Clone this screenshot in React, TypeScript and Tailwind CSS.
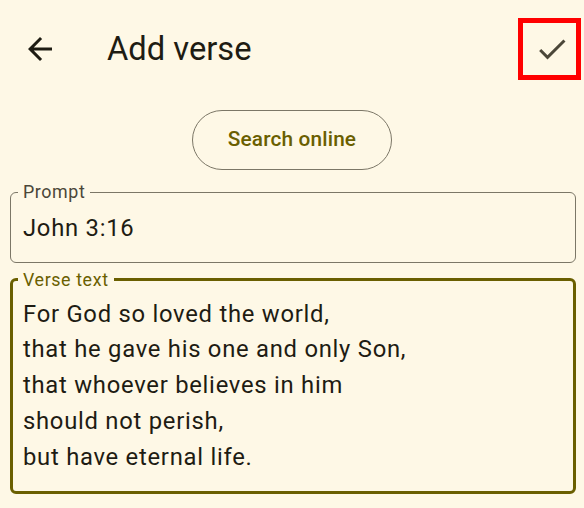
import React from 'react';

const verse = [
  'For God so loved the world,',
  'that he gave his one and only Son,',
  'that whoever believes in him',
  'should not perish,',
  'but have eternal life.',
];

function BackIcon() {
  return (
    <svg viewBox="0 0 24 24" className="w-[36px] h-[36px]" fill="#1e1c13">
      <path d="M20 11H7.83l5.59-5.59L12 4l-8 8 8 8 1.41-1.41L7.83 13H20v-2z" />
    </svg>
  );
}

function CheckIcon() {
  return (
    <svg viewBox="0 0 24 24" className="w-[36px] h-[36px]" fill="#4b4739">
      <path d="M9 16.17L4.83 12l-1.42 1.41L9 19 21 7l-1.41-1.41z" />
    </svg>
  );
}

export default function App() {
  return (
    <div
      className="w-[584px] h-[508px] overflow-hidden bg-[#fef8e6] text-[#1e1c13]"
      style={{ fontFamily: 'Roboto, "Noto Sans", sans-serif' }}
    >
      <header className="h-[97px] flex items-center">
        <button className="ml-[22px] w-[36px] h-[36px] flex items-center justify-center">
          <BackIcon />
        </button>
        <h1 className="ml-[49px] text-[32.7px] leading-[40px] font-normal">Add verse</h1>
        <div className="ml-auto mr-[3px] w-[63px] h-[62px] border-[5px] border-[#ff0000] flex items-center justify-center">
          <div className="ml-[4px]">
            <CheckIcon />
          </div>
        </div>
      </header>

      <div className="flex justify-center mt-[13px]">
        <button className="w-[200px] h-[60px] rounded-full border border-[#7c7767] text-[#6a5f00] text-[20.8px] font-medium tracking-[0.15px]">
          Search online
        </button>
      </div>

      <div className="pl-[10px] pr-[8px] mt-[10px] flex flex-col gap-[5px]">
        <fieldset className="border border-[#7c7767] rounded-[6px] px-[12px] pt-[7px] pb-[15px]">
          <legend className="-ml-[5px] px-[5px] text-[17.85px] leading-[24px] tracking-[0.6px] text-[#4b4739]">
            Prompt
          </legend>
          <div className="text-[23.8px] leading-[35.7px] tracking-[0.74px]">John 3:16</div>
        </fieldset>

        <fieldset className="border-[3px] border-[#6a5f00] rounded-[6px] px-[10px] pt-[5px] pb-[16px]">
          <legend className="-ml-[5px] px-[5px] text-[17.85px] leading-[24px] tracking-[0.6px] text-[#6a5f00]">
            Verse text
          </legend>
          {verse.map((line) => (
            <div key={line} className="text-[23.8px] leading-[35.7px] tracking-[0.74px]">
              {line}
            </div>
          ))}
        </fieldset>
      </div>
    </div>
  );
}
